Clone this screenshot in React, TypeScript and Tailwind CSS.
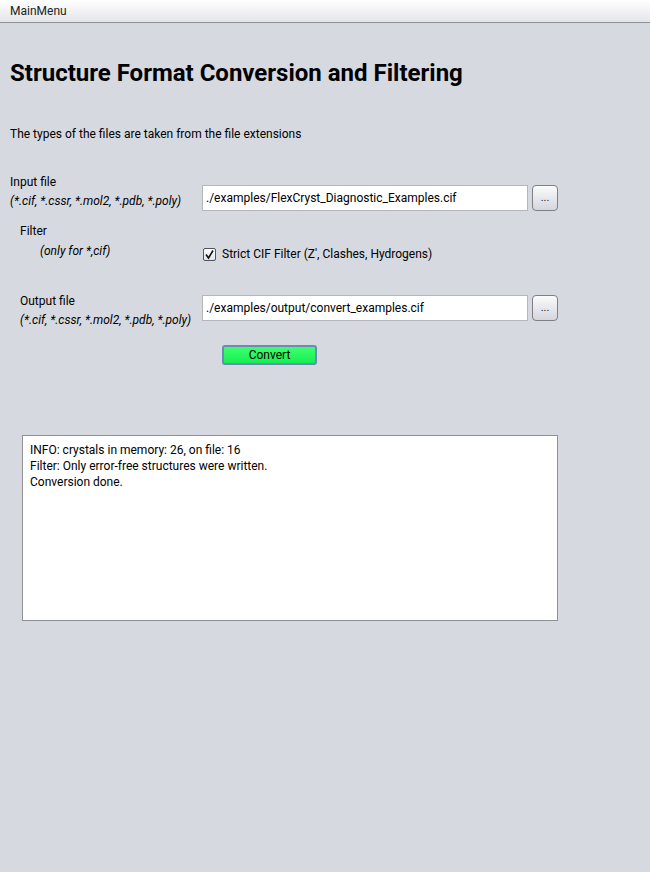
import React from "react";

const font = { fontFamily: "Roboto, 'Noto Sans', sans-serif" };

function BrowseButton() {
  return (
    <button className="ml-[4px] flex h-[26px] w-[26px] items-end justify-center rounded-[4px] border border-[#7d8087] bg-gradient-to-b from-[#fbfbfc] to-[#d4d6dc] pb-[7px] text-[11px] leading-none text-[#222]">
      ...
    </button>
  );
}

function TextField({ value }: { value: string }) {
  return (
    <div className="flex h-[26px] w-[326px] items-center border border-[#b4b6ba] bg-white pl-[3px] text-[12px] text-black">
      {value}
    </div>
  );
}

export default function App() {
  return (
    <div className="min-h-[872px] w-[650px] bg-[#d6d9e0] text-black" style={font}>
      <div className="flex h-[23px] items-center border-b border-[#8e9097] bg-gradient-to-b from-[#ffffff] to-[#e4e5e9] pl-[10px] text-[12px] text-[#222]">
        MainMenu
      </div>

      <h1 className="ml-[10px] mt-[36px] text-[24px] font-bold leading-[28px]">
        Structure Format Conversion and Filtering
      </h1>

      <p className="ml-[10px] mt-[39px] text-[12px] leading-[16px]">
        The types of the files are taken from the file extensions
      </p>

      <div className="mt-[32px] flex">
        <div className="ml-[10px] w-[192px] text-[12px] leading-[16px]">
          <div>Input file</div>
          <div className="mt-[3px] italic">(*.cif, *.cssr, *.mol2, *.pdb, *.poly)</div>
        </div>
        <div className="mt-[11px] flex">
          <TextField value="./examples/FlexCryst_Diagnostic_Examples.cif" />
          <BrowseButton />
        </div>
      </div>

      <div className="mt-[12px] flex">
        <div className="ml-[20px] w-[182px] text-[12px] leading-[16px]">
          <div>Filter</div>
          <div className="ml-[20px] mt-[4px] italic">(only for *,cif)</div>
        </div>
        <div className="mt-[23px] flex items-center">
          <div className="ml-[1px] flex h-[13px] w-[13px] items-center justify-center rounded-[2px] border border-[#4f5660] bg-gradient-to-b from-[#ffffff] to-[#e2e4e8]">
            <svg width="11" height="11" viewBox="0 0 11 11">
              <path d="M2 5.5 L4.5 9 L9 1.5" fill="none" stroke="#111" strokeWidth="1.6" />
            </svg>
          </div>
          <span className="ml-[6px] text-[12px] leading-[16px]">Strict CIF Filter (Z', Clashes, Hydrogens)</span>
        </div>
      </div>

      <div className="mt-[31px] flex">
        <div className="ml-[20px] w-[182px] text-[12px] leading-[16px]">
          <div>Output file</div>
          <div className="mt-[3px] italic">(*.cif, *.cssr, *.mol2, *.pdb, *.poly)</div>
        </div>
        <div className="mt-[2px] flex">
          <TextField value="./examples/output/convert_examples.cif" />
          <BrowseButton />
        </div>
      </div>

      <div className="ml-[222px] mt-[17px]">
        <button className="flex h-[20px] w-[95px] items-center justify-center rounded-[3px] border-2 border-[#6e8ab4] bg-gradient-to-b from-[#3cff6e] to-[#10f050] text-[12px] leading-none text-black">
          Convert
        </button>
      </div>

      <div className="ml-[22px] mt-[70px] h-[186px] w-[536px] border border-[#8f9196] bg-white px-[7px] pt-[6px] text-[12px] leading-[16px]">
        <div>INFO: crystals in memory: 26, on file: 16</div>
        <div>Filter: Only error-free structures were written.</div>
        <div>Conversion done.</div>
      </div>
    </div>
  );
}
